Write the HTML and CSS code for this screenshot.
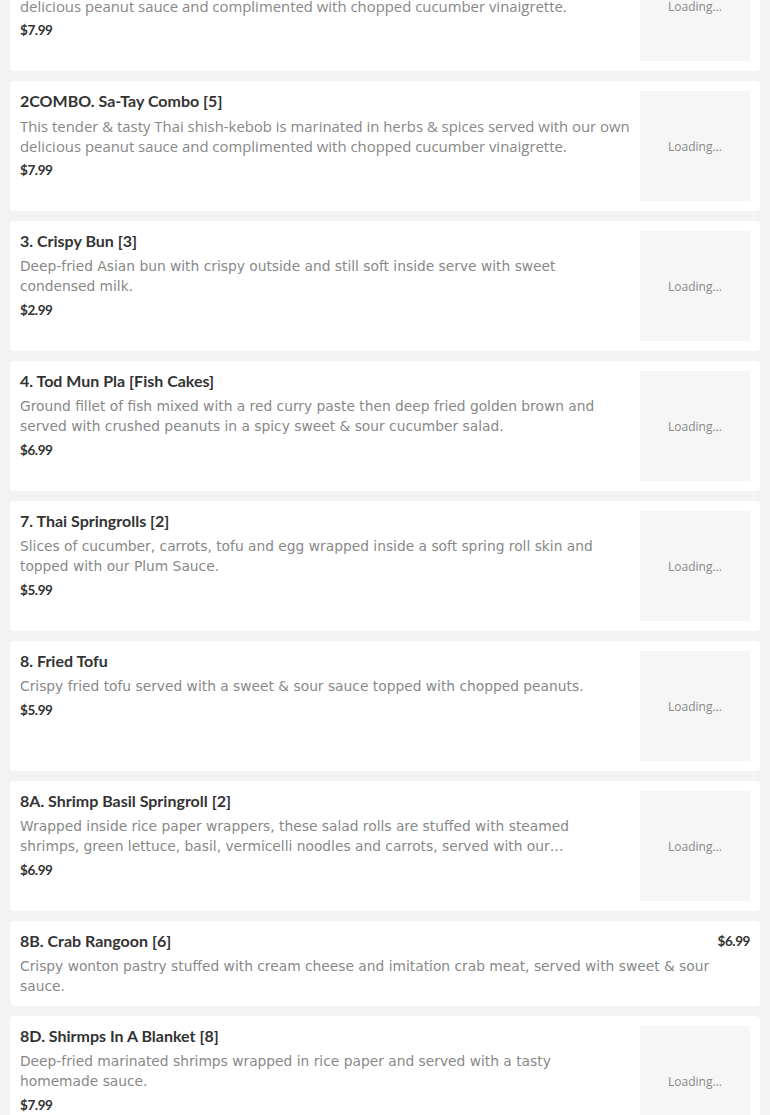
FILE: index.html
```html
<!DOCTYPE html>
<html lang="en">
<head>
<meta charset="utf-8">
<title>Menu</title>
<link rel="stylesheet" href="styles.css">
</head>
<body>
<div class="menu">
  <div class="card">
    <div class="info">
      <div class="title">2. Sa-Tay [4]</div>
      <div class="desc alt">This tender &amp; tasty Thai shish-kebob is marinated in herbs &amp; spices served with our own delicious peanut sauce and complimented with chopped cucumber vinaigrette.</div>
      <div class="price">$7.99</div>
    </div>
    <div class="thumb">Loading...</div>
  </div>
  <div class="card">
    <div class="info">
      <div class="title">2COMBO. Sa-Tay Combo [5]</div>
      <div class="desc alt">This tender &amp; tasty Thai shish-kebob is marinated in herbs &amp; spices served with our own delicious peanut sauce and complimented with chopped cucumber vinaigrette.</div>
      <div class="price">$7.99</div>
    </div>
    <div class="thumb">Loading...</div>
  </div>
  <div class="card">
    <div class="info">
      <div class="title">3. Crispy Bun [3]</div>
      <div class="desc">Deep-fried Asian bun with crispy outside and still soft inside serve with sweet condensed milk.</div>
      <div class="price">$2.99</div>
    </div>
    <div class="thumb">Loading...</div>
  </div>
  <div class="card">
    <div class="info">
      <div class="title">4. Tod Mun Pla [Fish Cakes]</div>
      <div class="desc">Ground fillet of fish mixed with a red curry paste then deep fried golden brown and served with crushed peanuts in a spicy sweet &amp; sour cucumber salad.</div>
      <div class="price">$6.99</div>
    </div>
    <div class="thumb">Loading...</div>
  </div>
  <div class="card">
    <div class="info">
      <div class="title">7. Thai Springrolls [2]</div>
      <div class="desc">Slices of cucumber, carrots, tofu and egg wrapped inside a soft spring roll skin and topped with our Plum Sauce.</div>
      <div class="price">$5.99</div>
    </div>
    <div class="thumb">Loading...</div>
  </div>
  <div class="card">
    <div class="info">
      <div class="title">8. Fried Tofu</div>
      <div class="desc">Crispy fried tofu served with a sweet &amp; sour sauce topped with chopped peanuts.</div>
      <div class="price">$5.99</div>
    </div>
    <div class="thumb">Loading...</div>
  </div>
  <div class="card">
    <div class="info">
      <div class="title">8A. Shrimp Basil Springroll [2]</div>
      <div class="desc">Wrapped inside rice paper wrappers, these salad rolls are stuffed with steamed shrimps, green lettuce, basil, vermicelli noodles and carrots, served with our homemade peanut sauce.</div>
      <div class="price">$6.99</div>
    </div>
    <div class="thumb">Loading...</div>
  </div>
  <div class="card">
    <div class="info">
      <div class="head">
        <div class="title">8B. Crab Rangoon [6]</div>
        <div class="price">$6.99</div>
      </div>
      <div class="desc">Crispy wonton pastry stuffed with cream cheese and imitation crab meat, served with sweet &amp; sour sauce.</div>
    </div>
  </div>
  <div class="card">
    <div class="info">
      <div class="title">8D. Shirmps In A Blanket [8]</div>
      <div class="desc">Deep-fried marinated shrimps wrapped in rice paper and served with a tasty homemade sauce.</div>
      <div class="price">$7.99</div>
    </div>
    <div class="thumb">Loading...</div>
  </div>
</div>
</body>
</html>
```
FILE: styles.css
```css
html, body {
  margin: 0;
  padding: 0;
  background: #f3f3f3;
}
body {
  font-family: "DejaVu Sans", sans-serif;
  color: #333;
}
.menu {
  display: flex;
  flex-direction: column;
  gap: 10px;
  padding: 0 10px;
  margin-top: -59px;
}
.card {
  background: #fff;
  border-radius: 4px;
  padding: 10px;
  display: flex;
  gap: 10px;
}
.info {
  flex: 1;
  min-width: 0;
}
.head {
  display: flex;
  justify-content: space-between;
  align-items: center;
}
.title {
  font-family: "Lato", sans-serif;
  font-weight: 700;
  font-size: 16px;
  line-height: 20px;
  color: #333;
}
.desc {
  margin-top: 5px;
  font-family: "DejaVu Sans", sans-serif;
  font-size: 13.8px;
  line-height: 20px;
  color: #888;
  display: -webkit-box;
  -webkit-line-clamp: 2;
  -webkit-box-orient: vertical;
  overflow: hidden;
}
.desc.alt {
  font-family: "Open Sans", sans-serif;
  font-size: 14.9px;
}
.price {
  margin-top: 4px;
  font-family: "Lato", sans-serif;
  font-weight: 700;
  font-size: 13.5px;
  line-height: 20px;
  color: #333;
  letter-spacing: -0.4px;
}
.head .price {
  margin-top: 0;
}
.thumb {
  width: 110px;
  height: 110px;
  flex: none;
  background: #f6f6f6;
  display: flex;
  align-items: center;
  justify-content: center;
  font-family: "Open Sans", sans-serif;
  font-size: 12px;
  color: #888;
}
```
